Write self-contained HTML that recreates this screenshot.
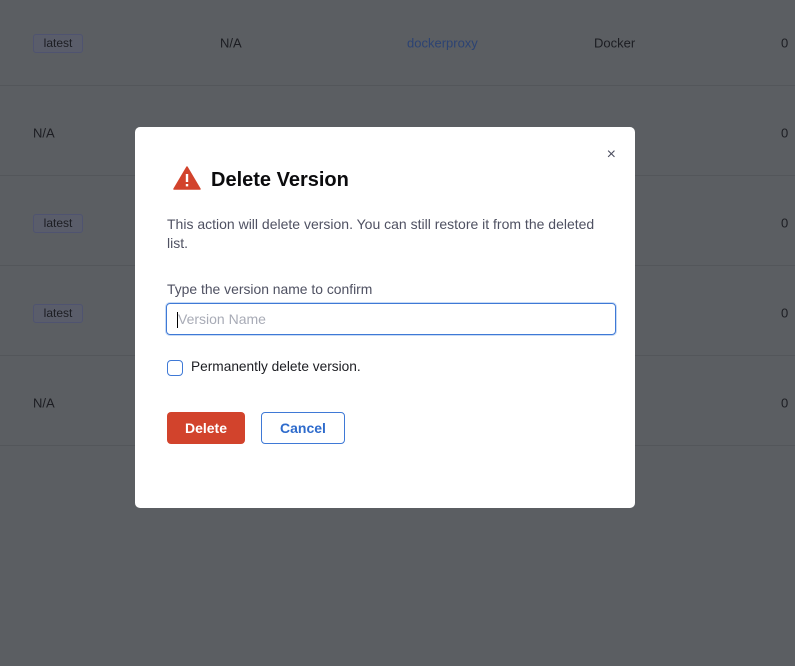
<!DOCTYPE html>
<html><head><style>
*{box-sizing:border-box;margin:0;padding:0}
body{width:795px;height:666px;background:#5b5e62;font-family:"Liberation Sans",sans-serif;position:relative;overflow:hidden;font-size:13px;color:#1c1d22}
.sep{position:absolute;left:0;right:0;height:1px;background:#53565a}
.t{position:absolute;transform:translateY(-50%);white-space:nowrap}
.badge{position:absolute;left:33px;width:50px;height:19px;border:1px solid #4f5370;background:#5a5d6a;border-radius:3px;font-size:12px;text-align:center;line-height:17px;color:#1c1d22}
.modal{position:absolute;left:135px;top:127px;width:500px;height:381px;background:#fff;border-radius:5px}
</style></head><body>
<div class="sep" style="top:85px"></div>
<div class="sep" style="top:175px"></div>
<div class="sep" style="top:265px"></div>
<div class="sep" style="top:355px"></div>
<div class="sep" style="top:445px"></div>
<div class="badge" style="top:34px">latest</div>
<div class="t" style="left:220px;top:43px">N/A</div>
<div class="t" style="left:407px;top:43px;color:#2c4373">dockerproxy</div>
<div class="t" style="left:594px;top:43px">Docker</div>
<div class="t" style="left:781px;top:43px">0</div>
<div class="t" style="left:33px;top:133px">N/A</div>
<div class="t" style="left:781px;top:133px">0</div>
<div class="badge" style="top:214px">latest</div>
<div class="t" style="left:781px;top:223px">0</div>
<div class="badge" style="top:304px">latest</div>
<div class="t" style="left:781px;top:313px">0</div>
<div class="t" style="left:33px;top:403px">N/A</div>
<div class="t" style="left:781px;top:403px">0</div>

<div class="modal">
  <div style="position:absolute;right:19px;top:19px;font-size:16px;color:#4f5162">×</div>
  <svg style="position:absolute;left:38px;top:39px" width="28" height="24" viewBox="0 0 28 24">
    <path d="M14 1 L27 23 L1 23 Z" fill="#d2432c" stroke="#d2432c" stroke-linejoin="round" stroke-width="1.5"/>
    <rect x="12.8" y="8" width="2.4" height="8" fill="#fff"/>
    <rect x="12.8" y="18" width="2.4" height="2.4" fill="#fff"/>
  </svg>
  <div style="position:absolute;left:76px;top:42px;font-size:20px;font-weight:bold;color:#0b0b0d">Delete Version</div>
  <div style="position:absolute;left:32px;top:88px;width:440px;font-size:14px;line-height:19px;color:#4f5162">This action will delete version. You can still restore it from the deleted list.</div>
  <div style="position:absolute;left:32px;top:154px;font-size:13.9px;color:#4f5162">Type the version name to confirm</div>
  <div style="position:absolute;left:31px;top:176px;width:450px;height:32px;border:1px solid #3f79d6;border-radius:4px;box-shadow:0 0 0 1px #c8dbf5;font-size:14px;color:#a8abb6;padding-left:10px;line-height:30px"><span style="border-left:1px solid #000;height:16px;display:inline-block;vertical-align:middle;margin-right:0"></span>Version Name</div>
  <div style="position:absolute;left:32px;top:233px;width:16px;height:16px;border:1px solid #3f79d6;border-radius:4px"></div>
  <div style="position:absolute;left:56px;top:232px;font-size:13.7px;color:#1c1d22">Permanently delete version.</div>
  <div style="position:absolute;left:32px;top:285px;width:78px;height:32px;background:#d2432c;border-radius:4px;color:#fff;font-weight:bold;font-size:14px;text-align:center;line-height:32px">Delete</div>
  <div style="position:absolute;left:126px;top:285px;width:84px;height:32px;border:1px solid #3f79d6;border-radius:4px;color:#2e6bcc;font-weight:bold;font-size:14px;text-align:center;line-height:30px">Cancel</div>
</div>
</body></html>
